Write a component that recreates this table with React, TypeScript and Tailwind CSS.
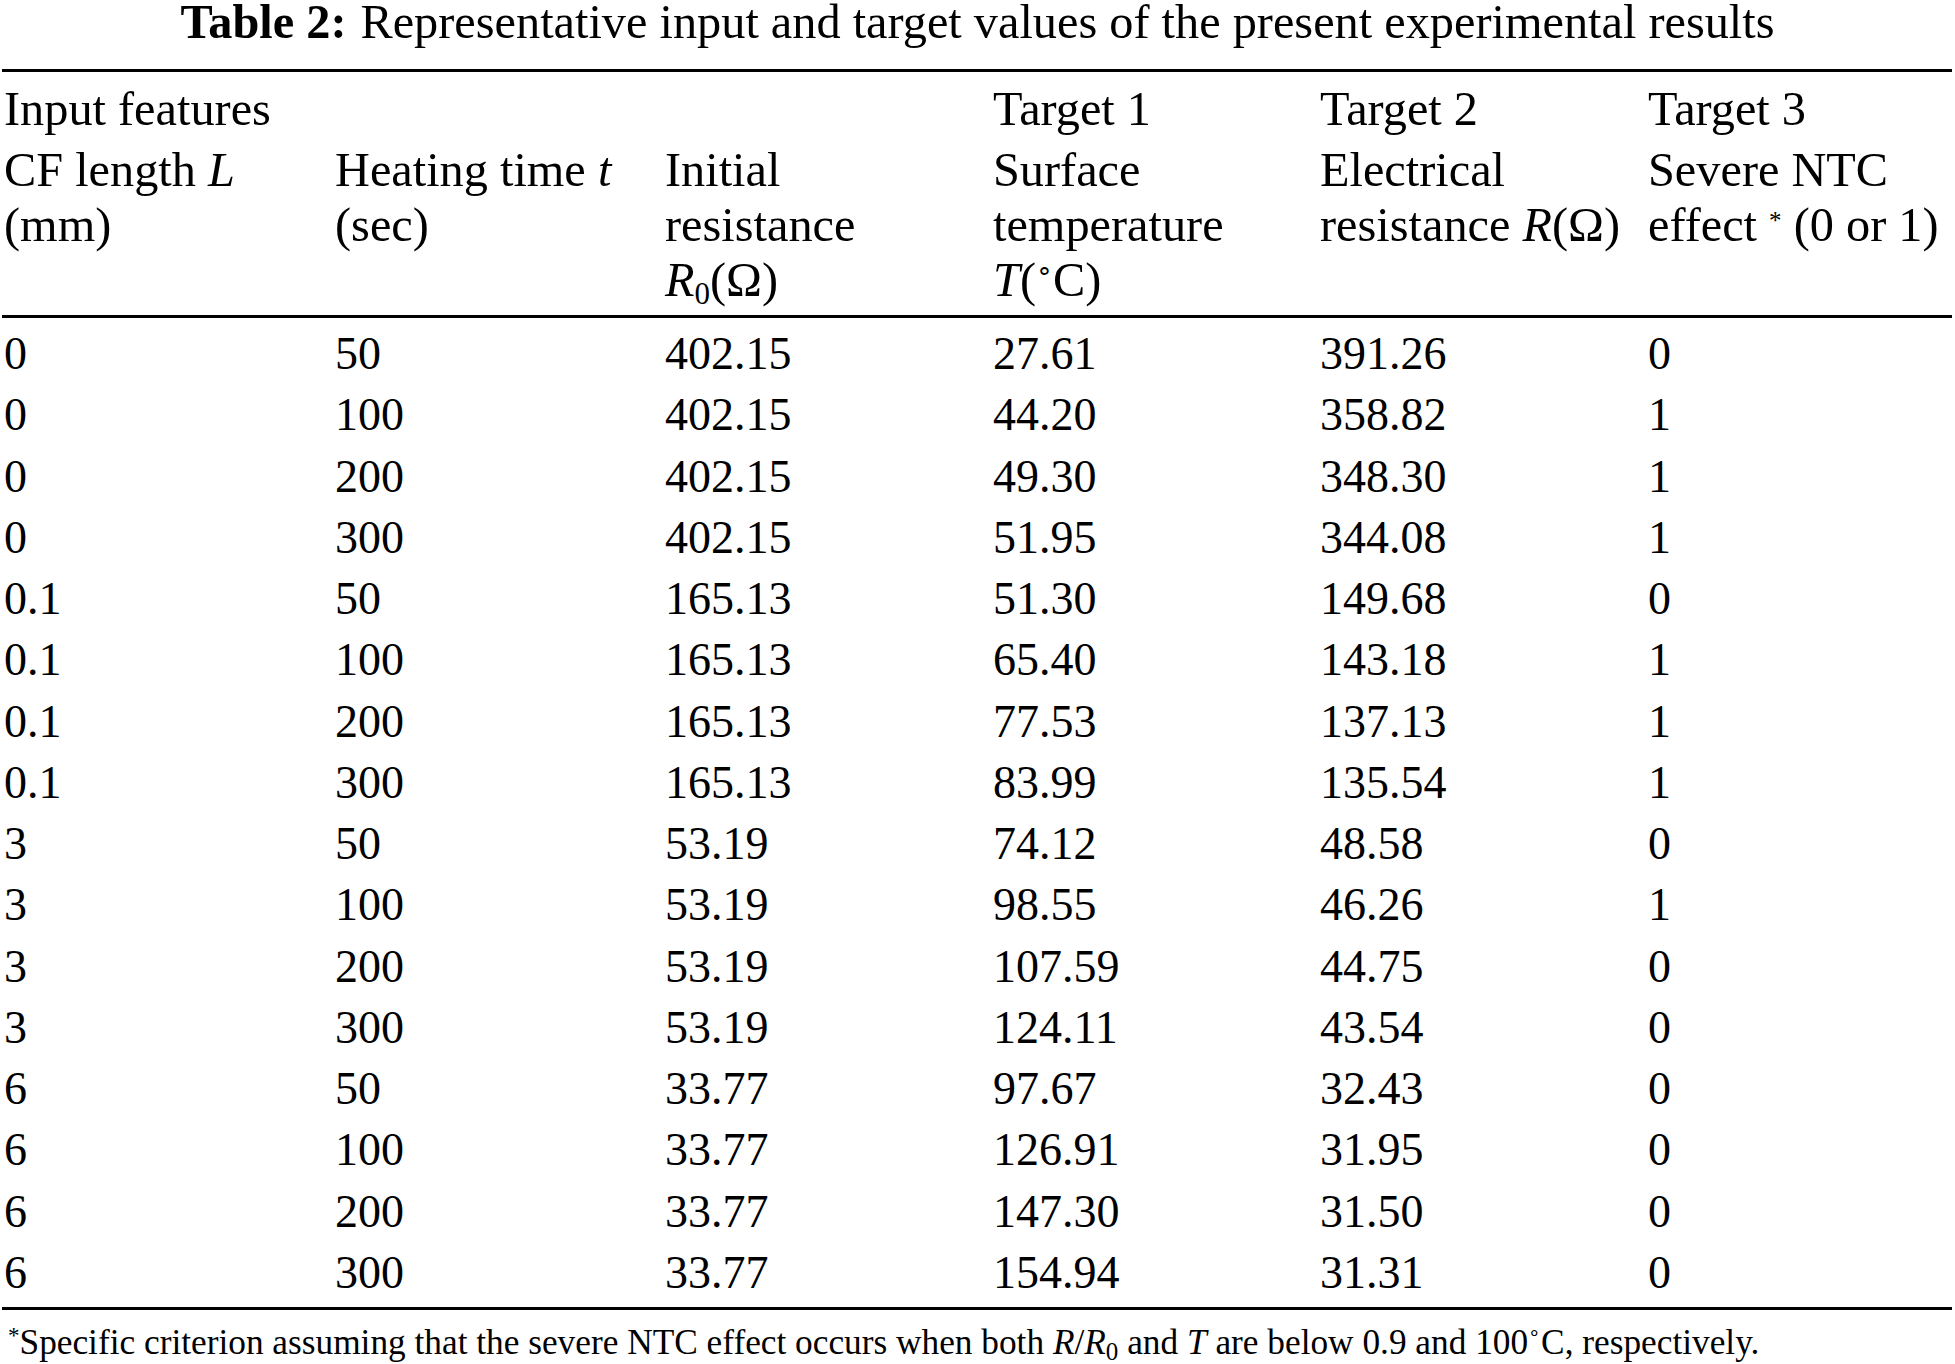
import React from 'react';

const rows: string[][] = [
  ['0', '50', '402.15', '27.61', '391.26', '0'],
  ['0', '100', '402.15', '44.20', '358.82', '1'],
  ['0', '200', '402.15', '49.30', '348.30', '1'],
  ['0', '300', '402.15', '51.95', '344.08', '1'],
  ['0.1', '50', '165.13', '51.30', '149.68', '0'],
  ['0.1', '100', '165.13', '65.40', '143.18', '1'],
  ['0.1', '200', '165.13', '77.53', '137.13', '1'],
  ['0.1', '300', '165.13', '83.99', '135.54', '1'],
  ['3', '50', '53.19', '74.12', '48.58', '0'],
  ['3', '100', '53.19', '98.55', '46.26', '1'],
  ['3', '200', '53.19', '107.59', '44.75', '0'],
  ['3', '300', '53.19', '124.11', '43.54', '0'],
  ['6', '50', '33.77', '97.67', '32.43', '0'],
  ['6', '100', '33.77', '126.91', '31.95', '0'],
  ['6', '200', '33.77', '147.30', '31.50', '0'],
  ['6', '300', '33.77', '154.94', '31.31', '0'],
];

const cols = 'grid grid-cols-[331px_330px_328px_327px_328px_1fr]';

export default function App() {
  return (
    <div className="w-[1955px] min-h-[1364px] bg-white text-black font-['Liberation_Serif','Times_New_Roman',serif]">
      {/* Caption */}
      <div className="pt-[2px] text-center text-[48.3px] leading-[40px] whitespace-nowrap">
        <span className="font-bold">Table 2:</span>
        <span className="ml-[14px]">Representative input and target values of the present experimental results</span>
      </div>

      <div className="ml-[2px] w-[1950px] mt-[27px] border-t-[3px] border-black">
        {/* Header */}
        <div className="pl-[2px] pt-[4px] pb-[8px] text-[48.3px] border-b-[3px] border-black">
          <div className={`${cols} leading-[66px] whitespace-nowrap`}>
            <div className="col-span-3">Input features</div>
            <div>Target 1</div>
            <div>Target 2</div>
            <div>Target 3</div>
          </div>
          <div className={`${cols} leading-[55px] whitespace-nowrap`}>
            <div>
              <div>
                CF length <i>L</i>
              </div>
              <div>(mm)</div>
            </div>
            <div>
              <div>
                Heating time <i>t</i>
              </div>
              <div>(sec)</div>
            </div>
            <div>
              <div>Initial</div>
              <div>resistance</div>
              <div>
                <i>R</i>
                <sub className="text-[31px]">0</sub>(Ω)
              </div>
            </div>
            <div>
              <div>Surface</div>
              <div>temperature</div>
              <div>
                <i>T</i>(<sup className="text-[27px] -top-[0.6em]">∘</sup>C)
              </div>
            </div>
            <div>
              <div>Electrical</div>
              <div>
                resistance <i>R</i>(Ω)
              </div>
            </div>
            <div>
              <div>Severe NTC</div>
              <div>
                effect <sup className="text-[25px]">*</sup> (0 or 1)
              </div>
            </div>
          </div>
        </div>

        {/* Body */}
        <div className="pl-[2px] pt-[5px] pb-[4px] text-[46px] border-b-[3px] border-black">
          {rows.map((r, i) => (
            <div key={i} className={`${cols} h-[61.25px] leading-[61.25px]`}>
              {r.map((c, j) => (
                <div key={j}>{c}</div>
              ))}
            </div>
          ))}
        </div>
      </div>

      {/* Footnote */}
      <div className="pl-[8px] pt-[13px] text-[35.3px] leading-[40px] whitespace-nowrap">
        <sup className="text-[23px]">*</sup>Specific criterion assuming that the severe NTC effect occurs when both{' '}
        <i>R</i>/<i>R</i>
        <sub className="text-[25px]">0</sub> and <i>T</i> are below 0.9 and 100
        <sup className="text-[20px] -top-[0.7em]">∘</sup>C, respectively.
      </div>
    </div>
  );
}
